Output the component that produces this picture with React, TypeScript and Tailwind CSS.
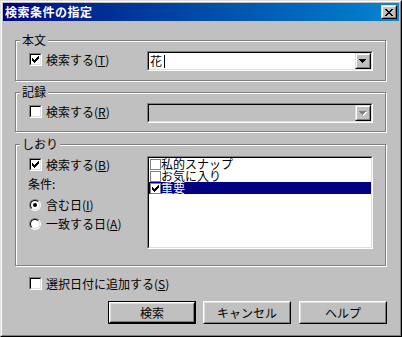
import type { ReactNode } from 'react';

function CheckMark({ color = '#000' }: { color?: string }) {
  // classic 7x7 pixel tick
  const cols = [2, 3, 4, 3, 2, 1, 0];
  return (
    <svg width="7" height="7" viewBox="0 0 7 7" shapeRendering="crispEdges">
      {cols.map((y, x) => (
        <rect key={x} x={x} y={y} width="1" height="3" fill={color} />
      ))}
    </svg>
  );
}

function CheckBox({ checked = false }: { checked?: boolean }) {
  return (
    <div className="h-[13px] w-[13px] shrink-0 border border-t-[#808080] border-l-[#808080] border-b-white border-r-white">
      <div className="flex h-full w-full items-center justify-center border border-t-black border-l-black border-b-[#dfdfdf] border-r-[#dfdfdf] bg-white">
        {checked && <CheckMark />}
      </div>
    </div>
  );
}

function Radio({ checked = false }: { checked?: boolean }) {
  return (
    <div className="h-[12px] w-[12px] shrink-0 rounded-full border border-t-[#808080] border-l-[#808080] border-b-white border-r-white">
      <div className="flex h-full w-full items-center justify-center rounded-full border border-t-black border-l-black border-b-[#dfdfdf] border-r-[#dfdfdf] bg-white">
        {checked && <div className="h-[4px] w-[4px] rounded-full bg-black" />}
      </div>
    </div>
  );
}

function Arrow({ disabled = false }: { disabled?: boolean }) {
  const tri = (fill: string, dx: number, dy: number) =>
    [7, 5, 3, 1].map((w, i) => (
      <rect key={`${fill}${i}`} x={(7 - w) / 2 + dx} y={i + dy} width={w} height="1" fill={fill} />
    ));
  return (
    <svg width="8" height="5" viewBox="0 0 8 5" shapeRendering="crispEdges">
      {disabled ? [...tri('#fff', 1, 1), ...tri('#808080', 0, 0)] : tri('#000', 0, 0)}
    </svg>
  );
}

function Raised({ className, children }: { className?: string; children?: ReactNode }) {
  return (
    <div className={`border border-t-[#dfdfdf] border-l-[#dfdfdf] border-b-black border-r-black bg-[#c0c0c0] ${className ?? ''}`}>
      <div className="flex h-full w-full items-center justify-center border border-t-white border-l-white border-b-[#808080] border-r-[#808080]">
        {children}
      </div>
    </div>
  );
}

function Sunken({ className, children }: { className?: string; children?: ReactNode }) {
  return (
    <div className={`border border-t-[#808080] border-l-[#808080] border-b-white border-r-white ${className ?? ''}`}>
      <div className="h-full w-full border border-t-black border-l-black border-b-[#dfdfdf] border-r-[#dfdfdf]">
        {children}
      </div>
    </div>
  );
}

function Combo({ value, disabled = false }: { value?: string; disabled?: boolean }) {
  return (
    <Sunken className="h-[20px] w-[226px]">
      <div className={`flex h-full items-center ${disabled ? 'bg-[#c0c0c0]' : 'bg-white'}`}>
        <div className="flex flex-1 items-center pl-[1px] leading-[14px]">
          {value}
          {value && <div className="ml-[2px] h-[13px] w-px bg-black" />}
        </div>
        <Raised className="h-[16px] w-[16px]">
          <Arrow disabled={disabled} />
        </Raised>
      </div>
    </Sunken>
  );
}

function Group({ label, className, children }: { label: string; className?: string; children?: ReactNode }) {
  return (
    <div className={`relative w-[371px] border border-[#808080] shadow-[inset_1px_1px_0_#fff,1px_1px_0_#fff] ${className ?? ''}`}>
      <span className="absolute top-[-8px] left-[4px] bg-[#c0c0c0] px-[2px] leading-[14px]">{label}</span>
      {children}
    </div>
  );
}

function Key({ k }: { k: string }) {
  return (
    <>
      (<span className="underline underline-offset-[1px]">{k}</span>)
    </>
  );
}

function CheckRow({ checked, text, k }: { checked?: boolean; text: string; k: string }) {
  return (
    <div className="flex h-[13px] items-center gap-1 leading-[14px]">
      <CheckBox checked={checked} />
      <span>
        {text}
        <Key k={k} />
      </span>
    </div>
  );
}

function Button({ children, isDefault = false, className }: { children: ReactNode; isDefault?: boolean; className?: string }) {
  return (
    <div className={`h-[23px] w-[88px] ${isDefault ? 'border border-black' : ''} ${className ?? ''}`}>
      <div className="h-full w-full border border-t-white border-l-white border-b-black border-r-black">
        <div className="flex h-full w-full items-center justify-center border border-t-[#dfdfdf] border-l-[#dfdfdf] border-b-[#808080] border-r-[#808080] leading-[14px]">
          {children}
        </div>
      </div>
    </div>
  );
}

function CloseGlyph() {
  const rows: [number, number][][] = [
    [[0, 2], [6, 2]],
    [[1, 2], [5, 2]],
    [[2, 4]],
    [[3, 2]],
    [[2, 4]],
    [[1, 2], [5, 2]],
    [[0, 2], [6, 2]],
  ];
  return (
    <svg width="8" height="7" viewBox="0 0 8 7" shapeRendering="crispEdges">
      {rows.flatMap((segs, y) => segs.map(([x, w]) => <rect key={`${x}-${y}`} x={x} y={y} width={w} height="1" fill="#000" />))}
    </svg>
  );
}

const bookmarks = [
  { name: '私的スナップ', checked: false, selected: false },
  { name: 'お気に入り', checked: false, selected: false },
  { name: '重要', checked: true, selected: true },
];

export default function App() {
  return (
    <div className="h-[337px] w-[402px] border border-t-[#dfdfdf] border-l-[#dfdfdf] border-b-black border-r-black bg-[#c0c0c0] font-['Noto_Sans_CJK_JP',sans-serif] text-[12px] text-black">
      <div className="h-full w-full border border-t-white border-l-white border-b-[#808080] border-r-[#808080] p-px">
        {/* Title bar */}
        <div className="flex h-[18px] items-center justify-between bg-linear-to-r from-[#000080] to-[#1084d0] pr-[2px] pl-[2px]">
          <span className="font-bold leading-[14px] tracking-[0.5px] text-white">検索条件の指定</span>
          <Raised className="h-[14px] w-[16px]">
            <CloseGlyph />
          </Raised>
        </div>

        <div className="pl-[12px]">
          {/* 本文 */}
          <Group label="本文" className="mt-[19px] h-[41px]">
            <div className="flex pt-[10px]">
              <div className="w-[131px] pt-[2px] pl-[13px]">
                <CheckRow checked text="検索する" k="T" />
              </div>
              <Combo value="花" />
            </div>
          </Group>

          {/* 記録 */}
          <Group label="記録" className="mt-[11px] h-[40px]">
            <div className="flex pt-[10px]">
              <div className="w-[131px] pt-[2px] pl-[13px]">
                <CheckRow text="検索する" k="R" />
              </div>
              <Combo disabled />
            </div>
          </Group>

          {/* しおり */}
          <Group label="しおり" className="mt-[12px] h-[122px]">
            <div className="flex pt-[11px]">
              <div className="w-[131px] pt-[2px] pl-[13px]">
                <CheckRow checked text="検索する" k="B" />
                <div className="mt-[6px] ml-[-1px] leading-[14px]">条件:</div>
                <div className="mt-[8px] flex h-[12px] items-center gap-[5px] leading-[14px]">
                  <Radio checked />
                  <span>
                    含む日<Key k="I" />
                  </span>
                </div>
                <div className="mt-[7px] flex h-[12px] items-center gap-[5px] leading-[14px]">
                  <Radio />
                  <span>
                    一致する日<Key k="A" />
                  </span>
                </div>
              </div>
              <Sunken className="h-[93px] w-[226px]">
                <div className="h-full bg-white">
                  {bookmarks.map((b) => (
                    <div
                      key={b.name}
                      className={`flex h-[12px] items-center leading-[12px] ${b.selected ? 'bg-[#000080] text-white' : ''}`}
                    >
                      <div className="ml-[1px] flex h-[11px] w-[11px] items-center justify-center border border-[#808080] bg-white">
                        {b.checked && <CheckMark />}
                      </div>
                      <span>{b.name}</span>
                    </div>
                  ))}
                </div>
              </Sunken>
            </div>
          </Group>

          <div className="mt-[11px] ml-[14px]">
            <CheckRow text="選択日付に追加する" k="S" />
          </div>

          <div className="mt-[11px] ml-[93px] flex">
            <Button isDefault className="mr-[7px]">検索</Button>
            <Button className="mr-[8px]">キャンセル</Button>
            <Button>ヘルプ</Button>
          </div>
        </div>
      </div>
    </div>
  );
}
